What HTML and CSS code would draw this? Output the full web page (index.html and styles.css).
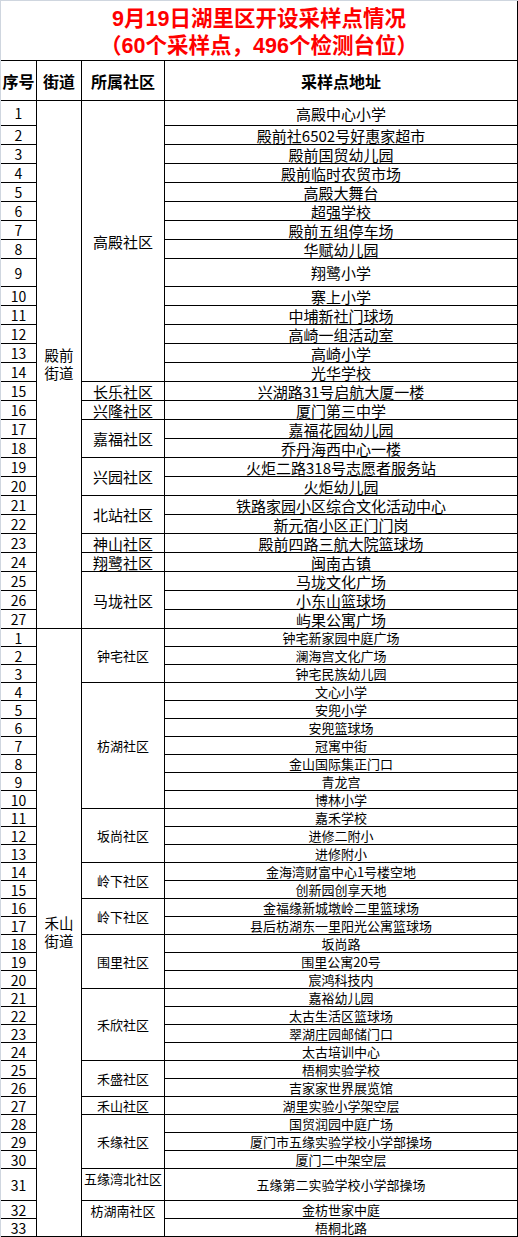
FILE: index.html
```html
<!DOCTYPE html>
<html lang="zh-CN">
<head>
<meta charset="utf-8">
<title>9月19日湖里区开设采样点情况</title>
<link rel="stylesheet" href="styles.css">
</head>
<body>
<div class="sheet">
  <div class="title">
    <div class="title-line">9月19日湖里区开设采样点情况</div>
    <div class="title-line">（60个采样点，496个检测台位）</div>
  </div>
  <div class="grid head">
    <div class="th">序号</div>
    <div class="th">街道</div>
    <div class="th">所属社区</div>
    <div class="th">采样点地址</div>
  </div>
  <div class="grid sec sec-a">
    <div class="n h24">1</div>
    <div class="st span-27"><span class="st-line">殿前</span><span class="st-line">街道</span></div>
    <div class="cm span-14">高殿社区</div>
    <div class="ad">高殿中心小学</div>
    <div class="n">2</div><div class="ad">殿前社6502号好惠家超市</div>
    <div class="n">3</div><div class="ad">殿前国贸幼儿园</div>
    <div class="n">4</div><div class="ad">殿前临时农贸市场</div>
    <div class="n">5</div><div class="ad">高殿大舞台</div>
    <div class="n">6</div><div class="ad">超强学校</div>
    <div class="n">7</div><div class="ad">殿前五组停车场</div>
    <div class="n">8</div><div class="ad">华赋幼儿园</div>
    <div class="n h27">9</div><div class="ad">翔鹭小学</div>
    <div class="n">10</div><div class="ad">寨上小学</div>
    <div class="n">11</div><div class="ad">中埔新社门球场</div>
    <div class="n">12</div><div class="ad">高崎一组活动室</div>
    <div class="n">13</div><div class="ad">高崎小学</div>
    <div class="n">14</div><div class="ad">光华学校</div>
    <div class="n">15</div><div class="cm">长乐社区</div><div class="ad">兴湖路31号启航大厦一楼</div>
    <div class="n">16</div><div class="cm">兴隆社区</div><div class="ad">厦门第三中学</div>
    <div class="n">17</div><div class="cm span-2">嘉福社区</div><div class="ad">嘉福花园幼儿园</div>
    <div class="n">18</div><div class="ad">乔丹海西中心一楼</div>
    <div class="n">19</div><div class="cm span-2">兴园社区</div><div class="ad">火炬二路318号志愿者服务站</div>
    <div class="n">20</div><div class="ad">火炬幼儿园</div>
    <div class="n">21</div><div class="cm span-2">北站社区</div><div class="ad">铁路家园小区综合文化活动中心</div>
    <div class="n">22</div><div class="ad">新元宿小区正门门岗</div>
    <div class="n">23</div><div class="cm">神山社区</div><div class="ad">殿前四路三航大院篮球场</div>
    <div class="n">24</div><div class="cm">翔鹭社区</div><div class="ad">闽南古镇</div>
    <div class="n">25</div><div class="cm span-3">马垅社区</div><div class="ad">马垅文化广场</div>
    <div class="n">26</div><div class="ad">小东山篮球场</div>
    <div class="n">27</div><div class="ad">屿果公寓广场</div>
  </div>
  <div class="grid sec sec-b">
    <div class="n">1</div>
    <div class="st span-33"><span class="st-line">禾山</span><span class="st-line">街道</span></div>
    <div class="cm span-3">钟宅社区</div>
    <div class="ad">钟宅新家园中庭广场</div>
    <div class="n">2</div><div class="ad">澜海宫文化广场</div>
    <div class="n">3</div><div class="ad">钟宅民族幼儿园</div>
    <div class="n">4</div><div class="cm span-7">枋湖社区</div><div class="ad">文心小学</div>
    <div class="n">5</div><div class="ad">安兜小学</div>
    <div class="n">6</div><div class="ad">安兜篮球场</div>
    <div class="n">7</div><div class="ad">冠寓中街</div>
    <div class="n">8</div><div class="ad">金山国际集正门口</div>
    <div class="n">9</div><div class="ad">青龙宫</div>
    <div class="n">10</div><div class="ad">博林小学</div>
    <div class="n">11</div><div class="cm span-3">坂尚社区</div><div class="ad">嘉禾学校</div>
    <div class="n">12</div><div class="ad">进修二附小</div>
    <div class="n">13</div><div class="ad">进修附小</div>
    <div class="n">14</div><div class="cm span-2">岭下社区</div><div class="ad">金海湾财富中心1号楼空地</div>
    <div class="n">15</div><div class="ad">创新园创享天地</div>
    <div class="n">16</div><div class="cm span-2">岭下社区</div><div class="ad">金福缘新城墩岭二里篮球场</div>
    <div class="n">17</div><div class="ad">县后枋湖东一里阳光公寓篮球场</div>
    <div class="n">18</div><div class="cm span-3">围里社区</div><div class="ad">坂尚路</div>
    <div class="n">19</div><div class="ad">围里公寓20号</div>
    <div class="n">20</div><div class="ad">宸鸿科技内</div>
    <div class="n">21</div><div class="cm span-4">禾欣社区</div><div class="ad">嘉裕幼儿园</div>
    <div class="n">22</div><div class="ad">太古生活区篮球场</div>
    <div class="n">23</div><div class="ad">翠湖庄园邮储门口</div>
    <div class="n">24</div><div class="ad">太古培训中心</div>
    <div class="n">25</div><div class="cm span-2">禾盛社区</div><div class="ad">梧桐实验学校</div>
    <div class="n">26</div><div class="ad">吉家家世界展览馆</div>
    <div class="n">27</div><div class="cm">禾山社区</div><div class="ad">湖里实验小学架空层</div>
    <div class="n">28</div><div class="cm span-3">禾缘社区</div><div class="ad">国贸润园中庭广场</div>
    <div class="n">29</div><div class="ad">厦门市五缘实验学校小学部操场</div>
    <div class="n">30</div><div class="ad">厦门二中架空层</div>
    <div class="n h31">31</div><div class="cm top">五缘湾北社区</div><div class="ad">五缘第二实验学校小学部操场</div>
    <div class="n">32</div><div class="cm top span-2">枋湖南社区</div><div class="ad">金枋世家中庭</div>
    <div class="n">33</div><div class="ad">梧桐北路</div>
  </div>
</div>
</body>
</html>
```

FILE: styles.css
```css
html, body {
  margin: 0;
  padding: 0;
  background: #ffffff;
}

body {
  font-family: "Noto Sans CJK SC", "Noto Sans", sans-serif;
  color: #000000;
}

.sheet {
  width: 518px;
  box-sizing: border-box;
  display: flex;
  flex-direction: column;
  gap: 1px;
  background: #000000;
  border-left: 1px solid #cfd6df;
  border-top: 1px solid #cfd6df;
  padding: 0 1px 1px 0;
}

.title {
  height: 59px;
  box-sizing: border-box;
  padding-top: 5px;
  background: #ffffff;
  color: #ff0000;
  font-family: "Liberation Sans", "Noto Sans CJK SC", sans-serif;
  font-weight: 700;
  font-size: 21.5px;
  text-align: center;
  display: flex;
  flex-direction: column;
}

.title-line {
  height: 27px;
  line-height: 27px;
}

.grid {
  display: grid;
  grid-template-columns: 35px 44px 82px 352px;
  gap: 1px;
}

.grid > div {
  background: #ffffff;
  display: flex;
  align-items: center;
  justify-content: center;
  text-align: center;
  white-space: nowrap;
}

.th {
  height: 39px;
  font-weight: 700;
  font-size: 16px;
}

.sec {
  line-height: 17px;
}

.n {
  font-size: 14px;
  padding-top: 1px;
  box-sizing: border-box;
}

.sec-a .n { height: 18px; }
.sec-b .n { height: 17px; }

.sec-a .n.h24 { height: 24px; }
.sec-a .n.h27 { height: 27px; }
.sec-b .n.h31 { height: 31px; }

.sec-a .ad,
.sec-a .cm {
  font-size: 15px;
}

.sec-b .ad,
.sec-b .cm {
  font-size: 13px;
}

.grid > .st {
  flex-direction: column;
  font-family: "Liberation Sans", "Noto Sans CJK SC", sans-serif;
  font-size: 14.5px;
}

.st-line {
  display: block;
  height: 18px;
  line-height: 18px;
}

.grid > .cm.top {
  align-items: flex-start;
  padding-top: 1px;
}

.span-2 { grid-row: span 2; }
.span-3 { grid-row: span 3; }
.span-4 { grid-row: span 4; }
.span-7 { grid-row: span 7; }
.span-14 { grid-row: span 14; }
.span-27 { grid-row: span 27; }
.span-33 { grid-row: span 33; }
```
